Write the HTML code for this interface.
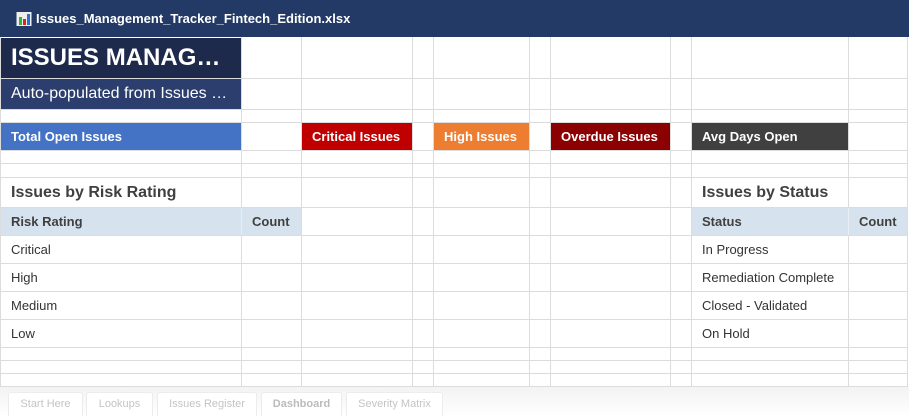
<!DOCTYPE html>
<html><head><meta charset="utf-8"><style>
*{margin:0;padding:0;box-sizing:border-box}
body{width:909px;height:418px;overflow:hidden;background:#fff;font-family:"Liberation Sans",Arial,sans-serif;position:relative}
.a{position:absolute}
.v{position:absolute;top:37px;height:349px;width:1px;background:#dcdcdc}
.h{position:absolute;left:0;width:908px;height:1px;background:#dcdcdc}
.c{position:absolute;color:#fff;font-weight:bold;font-size:13px;display:flex;align-items:center;padding-left:10px}
.t{position:absolute;font-size:13px;color:#333;left:11px}
.tab{position:absolute;top:392px;height:24px;border:1px solid #ececec;border-bottom:none;border-radius:3px 3px 0 0;background:#fff;font-size:11px;color:#c4c4c4;text-align:center;line-height:22px}
</style></head><body>
<div class="a" style="left:0;top:0;width:909px;height:37px;background:#233a66"></div>
<svg class="a" style="left:16px;top:11px" width="16" height="16" viewBox="0 0 16 16"><rect x="0.5" y="1" width="15" height="14" fill="#eee"/><rect x="3" y="6" width="3" height="8" fill="#2eb82e"/><rect x="7" y="8" width="3" height="6" fill="#d22"/><rect x="11" y="3" width="3" height="11" fill="#2a6fd6"/></svg>
<div class="a" style="left:36px;top:11px;font-size:13px;font-weight:bold;color:#fff">Issues_Management_Tracker_Fintech_Edition.xlsx</div>

<div class="v" style="left:0"></div>
<div class="v" style="left:241px"></div>
<div class="v" style="left:301px"></div>
<div class="v" style="left:412px"></div>
<div class="v" style="left:433px"></div>
<div class="v" style="left:529px"></div>
<div class="v" style="left:550px"></div>
<div class="v" style="left:670px"></div>
<div class="v" style="left:691px"></div>
<div class="v" style="left:848px"></div>
<div class="v" style="left:907px"></div>
<div class="h" style="top:78px"></div>
<div class="h" style="top:109px"></div>
<div class="h" style="top:122px"></div>
<div class="h" style="top:150px"></div>
<div class="h" style="top:163px"></div>
<div class="h" style="top:177px"></div>
<div class="h" style="top:207px"></div>
<div class="h" style="top:235px"></div>
<div class="h" style="top:263px"></div>
<div class="h" style="top:291px"></div>
<div class="h" style="top:319px"></div>
<div class="h" style="top:347px"></div>
<div class="h" style="top:360px"></div>
<div class="h" style="top:373px"></div>
<div class="h" style="top:386px"></div>

<div class="a" style="left:1px;top:38px;width:240px;height:40px;background:#1e2a4c;color:#fff;font-size:24px;font-weight:bold;padding:6px 0 0 10px;white-space:nowrap;overflow:hidden">ISSUES MANAG…</div>
<div class="a" style="left:1px;top:79px;width:240px;height:30px;background:#2c3e6e;color:#fff;font-size:16px;padding:6px 0 0 10px;white-space:nowrap;overflow:hidden">Auto-populated from Issues …</div>
<div class="c" style="left:1px;top:123px;width:240px;height:27px;background:#4472c4">Total Open Issues</div>
<div class="c" style="left:302px;top:123px;width:110px;height:27px;background:#c00000">Critical Issues</div>
<div class="c" style="left:434px;top:123px;width:95px;height:27px;background:#ed7d31">High Issues</div>
<div class="c" style="left:551px;top:123px;width:119px;height:27px;background:#8b0000">Overdue Issues</div>
<div class="c" style="left:692px;top:123px;width:156px;height:27px;background:#404040">Avg Days Open</div>

<div class="a" style="left:11px;top:184px;font-size:16px;font-weight:bold;color:#404040">Issues by Risk Rating</div>
<div class="a" style="left:702px;top:184px;font-size:16px;font-weight:bold;color:#404040">Issues by Status</div>

<div class="a" style="left:1px;top:208px;width:300px;height:27px;background:#d6e3ee"></div>
<div class="a" style="left:241px;top:208px;width:1px;height:27px;background:#e8eef4"></div>
<div class="a" style="left:692px;top:208px;width:215px;height:27px;background:#d6e3ee"></div>
<div class="a" style="left:848px;top:208px;width:1px;height:27px;background:#e8eef4"></div>
<div class="a" style="left:11px;top:214px;font-size:13px;font-weight:bold;color:#404040">Risk Rating</div>
<div class="a" style="left:252px;top:214px;font-size:13px;font-weight:bold;color:#404040">Count</div>
<div class="a" style="left:702px;top:214px;font-size:13px;font-weight:bold;color:#404040">Status</div>
<div class="a" style="left:859px;top:214px;font-size:13px;font-weight:bold;color:#404040">Count</div>

<div class="t" style="top:242px">Critical</div>
<div class="t" style="top:270px">High</div>
<div class="t" style="top:298px">Medium</div>
<div class="t" style="top:326px">Low</div>
<div class="t" style="top:242px;left:702px">In Progress</div>
<div class="t" style="top:270px;left:702px">Remediation Complete</div>
<div class="t" style="top:298px;left:702px">Closed - Validated</div>
<div class="t" style="top:326px;left:702px">On Hold</div>

<div class="a" style="left:0;top:387px;width:909px;height:31px;background:linear-gradient(#f3f3f3,#fff)"></div>
<div class="tab" style="left:8px;width:75px">Start Here</div>
<div class="tab" style="left:86px;width:67px">Lookups</div>
<div class="tab" style="left:157px;width:100px">Issues Register</div>
<div class="tab" style="left:261px;width:81px;font-weight:bold;color:#bbb">Dashboard</div>
<div class="tab" style="left:346px;width:97px">Severity Matrix</div>
</body></html>
